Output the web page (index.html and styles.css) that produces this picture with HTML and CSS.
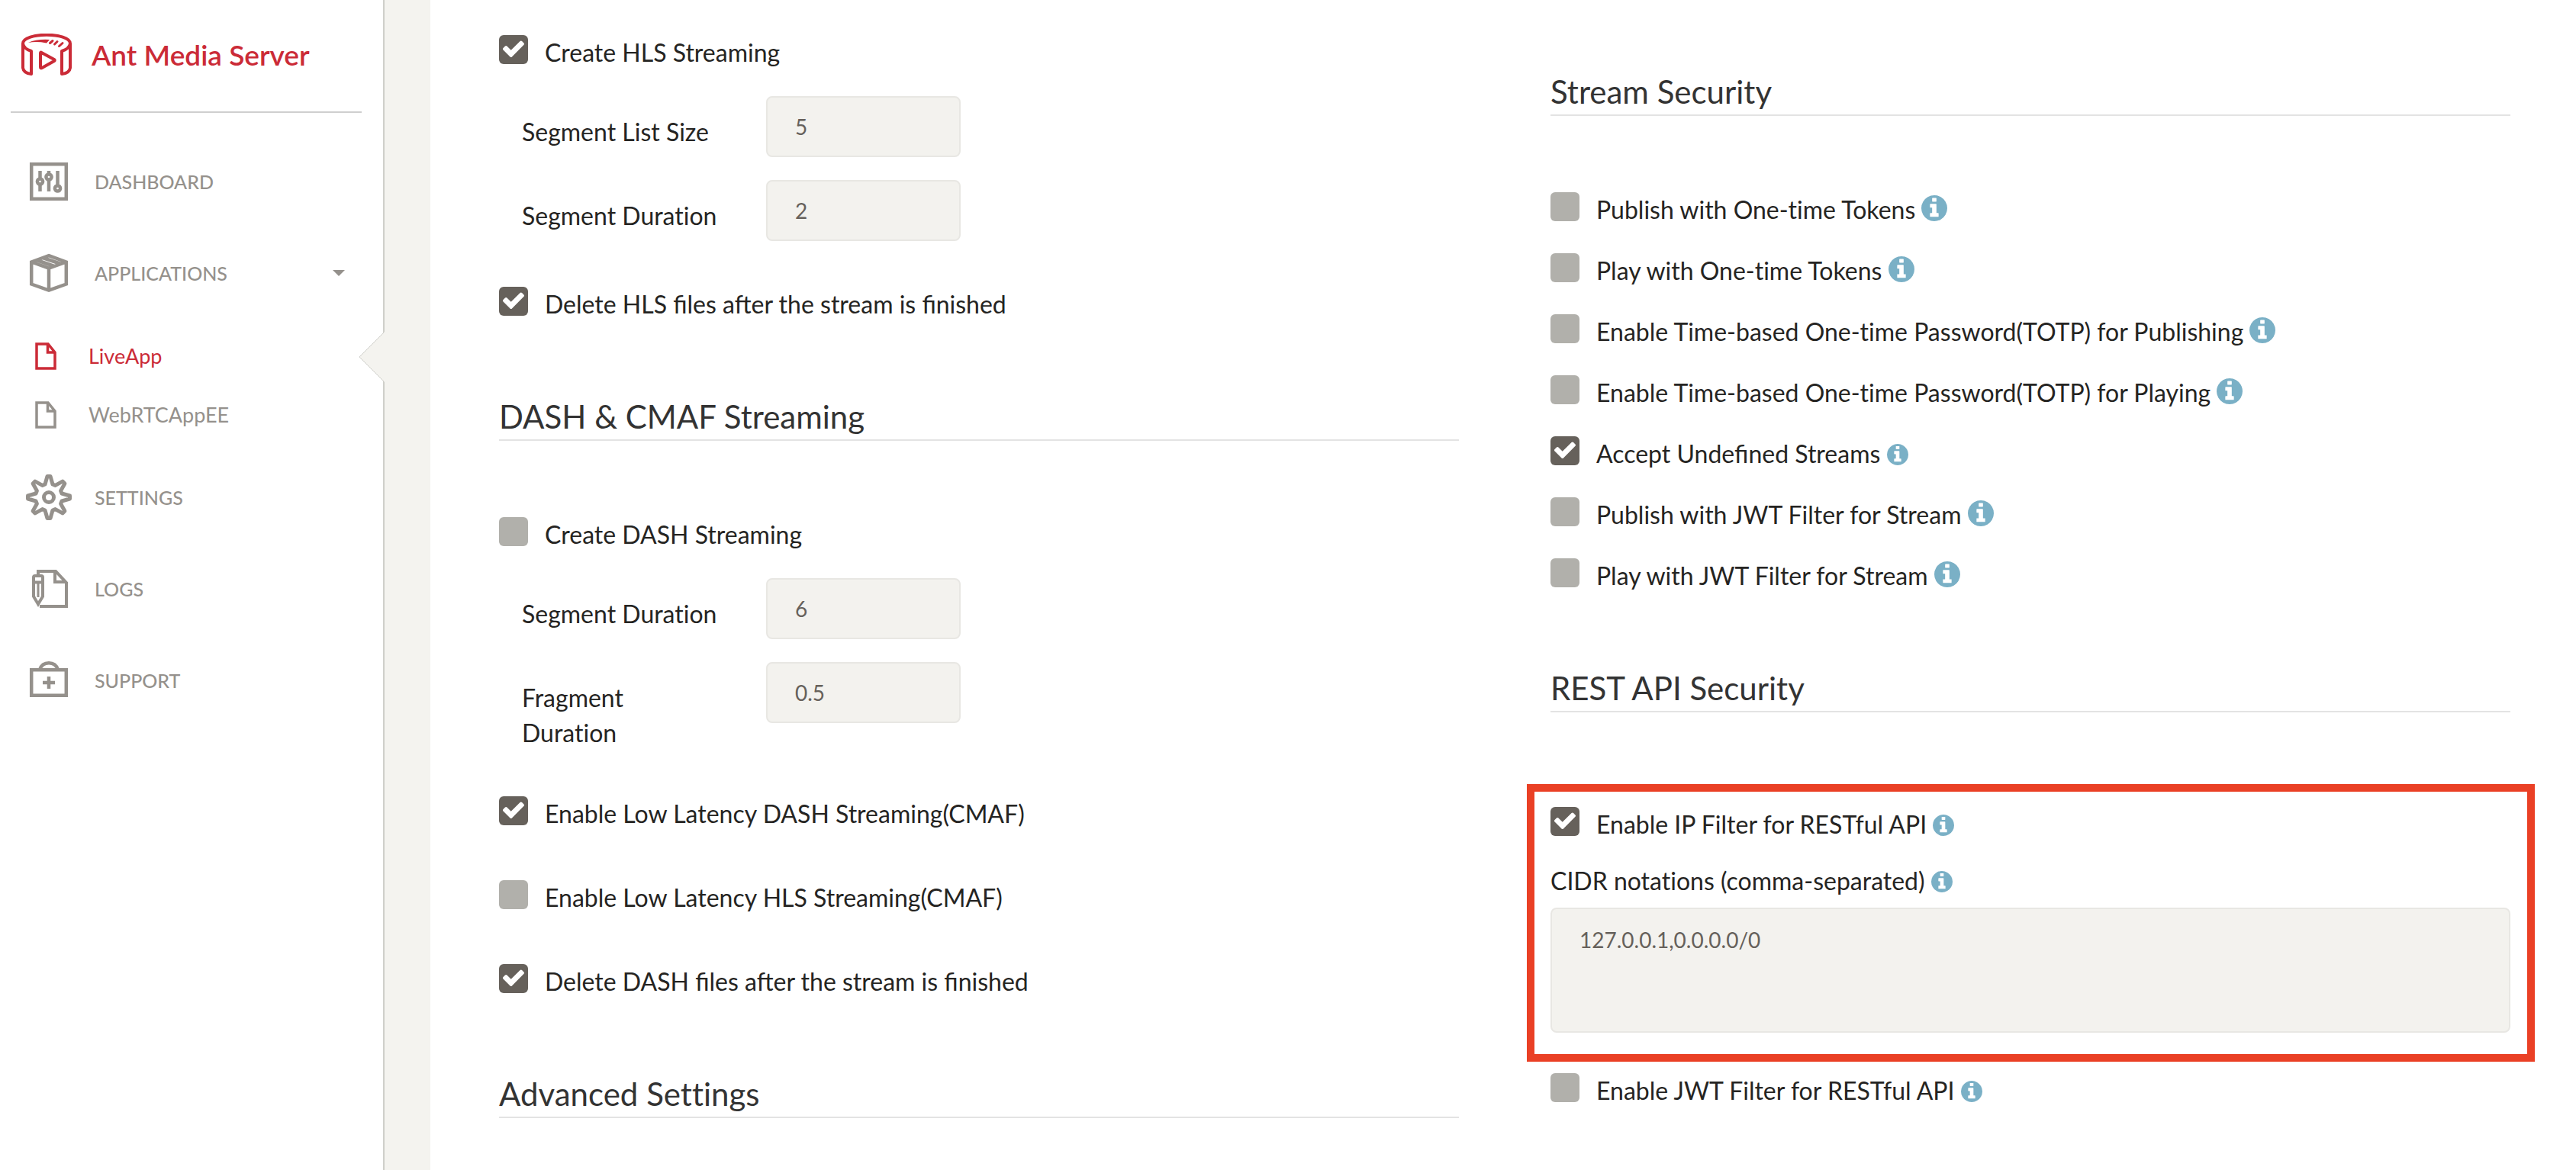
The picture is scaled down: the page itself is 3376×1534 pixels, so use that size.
FILE: index.html
```html
<!DOCTYPE html>
<html lang="en">
<head>
<meta charset="utf-8">
<title>Ant Media Server</title>
<link rel="stylesheet" href="styles.css">
</head>
<body>
<svg class="sprite" aria-hidden="true">
  <symbol id="info" viewBox="128 128 1536 1536"><path d="M1152 1376v-160q0-14-9-23t-23-9h-96v-512q0-14-9-23t-23-9h-320q-14 0-23 9t-9 23v160q0 14 9 23t23 9h96v320h-96q-14 0-23 9t-9 23v160q0 14 9 23t23 9h448q14 0 23-9t9-23zm-128-896v-160q0-14-9-23t-23-9h-192q-14 0-23 9t-9 23v160q0 14 9 23t23 9h192q14 0 23-9t9-23zm640 416q0 209-103 385.5t-279.5 279.5-385.5 103-385.5-103-279.5-279.5-103-385.5 103-385.5 279.5-279.5 385.5-103 385.5 103 279.5 279.5 103 385.5z"/></symbol>
  <symbol id="file" viewBox="0 0 28 36"><path d="M2 2H17L26 13V34H2ZM16.500 2V13H26" fill="none" stroke="currentColor" stroke-width="3.500"/></symbol>
</svg>
<div class="layout">
  <aside class="sidebar">
    <a class="brand" href="#">
      <svg class="brand-logo" viewBox="0 0 66 55" fill="none" stroke="currentColor" stroke-width="4" stroke-linejoin="round" stroke-linecap="round">
        <path d="M2 13V45Q3 52 13 53V23Q3 20 2 13C2 -2 64 -2 64 13Q63 20 53 23V53Q63 52 64 45V13"/>
        <path d="M25 25.500Q25 24 26.500 25L43 34Q44.500 35 43 36L27 45Q25 46 25 44Z"/>
        <path d="M9 12Q20 7 37 8L33 12.500Q20 10 9 12Z" fill="currentColor" stroke="none"/>
        <path d="M41 9.500L37.500 12.500M47 10.500L43.500 14M54 12.500L49.500 16.500" stroke-width="3"/>
      </svg>
      <span>Ant Media Server</span>
    </a>
    <nav>
      <ul class="nav">
        <li><a class="nav-link" href="#"><svg class="nav-icon" viewBox="0 0 50 50" fill="none" stroke="currentColor" stroke-width="4.500"><path d="M2.200 2.200H47.800V47.800H2.200ZM13.500 11V20M13.500 30V38M25 11V14M25 24V38M36.500 11V29"/><circle cx="13.500" cy="25" r="3.600"/><circle cx="25" cy="19" r="3.600"/><circle cx="36.500" cy="34" r="3.600"/></svg>DASHBOARD</a></li>
        <li><button class="nav-link" type="button" aria-expanded="true"><svg class="nav-icon" viewBox="0 0 50 50" fill="none" stroke="currentColor" stroke-width="4.500"><path d="M25 2.200L47.800 10.500V39.500L25 47.500L2.200 39.500V10.500ZM2.200 10.500L25 18.500L47.800 10.500M25 18.500V47.500M9 8L32 16M17 5L41 13"/></svg>APPLICATIONS<span class="caret"></span></button>
          <ul class="subnav">
            <li><a class="sub-link active" href="#"><svg class="file-icon"><use href="#file"/></svg>LiveApp</a><svg class="notch" viewBox="0 0 34 66"><path d="M34 0L1 33L34 66Z" fill="#f4f3ef"/><path d="M33 1L1 33L33 65" fill="none" stroke="#cfcfca" stroke-width="1"/></svg></li>
            <li><a class="sub-link" href="#"><svg class="file-icon"><use href="#file"/></svg>WebRTCAppEE</a></li>
          </ul>
        </li>
        <li><a class="nav-link" href="#"><svg class="nav-icon" viewBox="-25 -25 50 50" fill="none" stroke="currentColor" stroke-width="5"><path stroke-linejoin="round" d="M-2-27.500L2-27.500L5-17L8.500-15.600L18-20.900L20.900-18L15.600-8.500L17-5L27.500-2L27.500 2L17 5L15.600 8.500L20.900 18L18 20.900L8.500 15.600L5 17L2 27.500L-2 27.500L-5 17L-8.500 15.600L-18 20.900L-20.900 18L-15.600 8.500L-17 5L-27.500 2L-27.500-2L-17-5L-15.600-8.500L-20.900-18L-18-20.900L-8.500-15.600L-5-17Z"/><circle r="6.500"/></svg>SETTINGS</a></li>
        <li><a class="nav-link" href="#"><svg class="nav-icon" viewBox="0 0 50 50" fill="none" stroke="currentColor" stroke-width="4"><path d="M11 8V2H34L48 17V48H13M33 2V16H48M5 35V10Q5 8 7 8H15Q17 8 17 10V35L11 45ZM5 16.500H17"/><path d="M11 18V36" stroke-width="3"/></svg>LOGS</a></li>
        <li><a class="nav-link" href="#"><svg class="nav-icon" viewBox="0 0 50 50" fill="none" stroke="currentColor" stroke-width="4.500"><path d="M2.200 11.200H47.800V44.800H2.200ZM13 11Q16 2.200 25 2.200T37 11M17 28H33M25 20V36"/></svg>SUPPORT</a></li>
      </ul>
    </nav>
  </aside>

  <main class="content">
    <section class="column">
      <label class="option"><input type="checkbox" checked><span>Create HLS Streaming</span></label>
      <div class="fields">
        <div class="field"><label for="hls-size">Segment List Size</label><input id="hls-size" type="text" value="5"></div>
        <div class="field"><label for="hls-duration">Segment Duration</label><input id="hls-duration" type="text" value="2"></div>
      </div>
      <div class="options loose">
        <label class="option ligatures"><input type="checkbox" checked><span>Delete HLS files after the stream is finished</span></label>
      </div>
      <h2>DASH &amp; CMAF Streaming</h2>
      <label class="option"><input type="checkbox"><span>Create DASH Streaming</span></label>
      <div class="fields">
        <div class="field"><label for="dash-duration">Segment Duration</label><input id="dash-duration" type="text" value="6"></div>
        <div class="field"><label for="dash-fragment">Fragment Duration</label><input id="dash-fragment" type="text" value="0.5"></div>
      </div>
      <div class="options loose">
        <label class="option"><input type="checkbox" checked><span>Enable Low Latency DASH Streaming(CMAF)</span></label>
        <label class="option"><input type="checkbox"><span>Enable Low Latency HLS Streaming(CMAF)</span></label>
        <label class="option ligatures"><input type="checkbox" checked><span>Delete DASH files after the stream is finished</span></label>
      </div>
      <h2 class="last">Advanced Settings</h2>
    </section>

    <section class="column security">
      <h2>Stream Security</h2>
      <div class="options">
        <label class="option"><input type="checkbox"><span>Publish with One-time Tokens <svg class="info large"><use href="#info"/></svg></span></label>
        <label class="option"><input type="checkbox"><span>Play with One-time Tokens <svg class="info large"><use href="#info"/></svg></span></label>
        <label class="option"><input type="checkbox"><span>Enable Time-based One-time Password(TOTP) for Publishing <svg class="info large"><use href="#info"/></svg></span></label>
        <label class="option"><input type="checkbox"><span>Enable Time-based One-time Password(TOTP) for Playing <svg class="info large"><use href="#info"/></svg></span></label>
        <label class="option ligatures"><input type="checkbox" checked><span>Accept Undefined Streams <svg class="info"><use href="#info"/></svg></span></label>
        <label class="option"><input type="checkbox"><span>Publish with JWT Filter for Stream <svg class="info large"><use href="#info"/></svg></span></label>
        <label class="option"><input type="checkbox"><span>Play with JWT Filter for Stream <svg class="info large"><use href="#info"/></svg></span></label>
      </div>
      <h2 class="rest">REST API Security</h2>
      <div class="highlight">
        <label class="option"><input type="checkbox" checked><span>Enable IP Filter for RESTful API <svg class="info"><use href="#info"/></svg></span></label>
        <label class="cidr-label" for="cidr">CIDR notations (comma-separated) <svg class="info"><use href="#info"/></svg></label>
        <textarea id="cidr">127.0.0.1,0.0.0.0/0</textarea>
      </div>
      <label class="option"><input type="checkbox"><span>Enable JWT Filter for RESTful API <svg class="info"><use href="#info"/></svg></span></label>
    </section>
  </main>
</div>
</body>
</html>
```

FILE: styles.css
```css
* { box-sizing: border-box; }
body {
  margin: 0;
  background: #fff;
  color: #252422;
  font: 32px/46px Lato, "Open Sans", sans-serif;
  font-variant-ligatures: none;
}
ul { margin: 0; padding: 0; list-style: none; }
a { color: inherit; text-decoration: none; }
.sprite { display: none; }
.layout { display: flex; min-height: 100vh; background: #f4f3ef; }

/* Sidebar */
.sidebar {
  flex: 0 0 504px;
  background: #fff;
  border-right: 2px solid #cfcfca;
}
.brand {
  display: flex;
  align-items: center;
  gap: 26px;
  height: 148px;
  margin: 0 28px 30px 14px;
  padding: 0 14px 3px;
  border-bottom: 2px solid #cfcfcf;
  color: #cb2b37;
  font-size: 37px;
  font-weight: 600;
}
.brand-logo { width: 66px; height: 55px; }
.nav-link {
  display: flex;
  align-items: center;
  gap: 35px;
  width: 100%;
  height: 120px;
  padding: 0 50px 0 39px;
  border: 0;
  background: none;
  color: #95918c;
  font: 500 25px/46px Lato, "Open Sans", sans-serif;
}
.nav-icon { width: 50px; height: 50px; overflow: visible; }
.caret {
  margin-left: auto;
  border: 8px solid transparent;
  border-top-color: #95918c;
  border-bottom: 0;
}
.subnav { padding: 10px 0; }
.subnav li { position: relative; }
.sub-link {
  display: flex;
  align-items: center;
  gap: 42px;
  height: 77px;
  padding-left: 46px;
  color: #95918c;
  font-size: 27px;
}
.sub-link.active { color: #cb2b37; }
.file-icon { width: 28px; height: 36px; }
.notch { position: absolute; top: 7px; right: -2px; width: 34px; height: 66px; }

/* Settings form */
.content {
  flex: 1;
  display: grid;
  grid-template-columns: 1fr 1fr;
  gap: 120px;
  margin-left: 60px;
  padding: 0 86px 0 90px;
  background: #fff;
}
.column { padding: 46px 0; }
.security { padding-top: 94px; }
h2 {
  margin: 98px 0 100px;
  padding-bottom: 4px;
  border-bottom: 2px solid #e3e3e3;
  color: #333;
  font-size: 42px;
  font-weight: 400;
  line-height: 52px;
}
h2.last { margin-bottom: 0; }
h2.rest { margin-bottom: 94px; }
.security h2:first-child { margin-top: 0; }

.option { display: flex; align-items: flex-start; gap: 22px; }
.option.ligatures { font-variant-ligatures: normal; }
.options { display: grid; gap: 34px; }
.options.loose { gap: 64px; }
input[type="checkbox"] {
  appearance: none;
  flex: none;
  width: 38px;
  height: 38px;
  margin: 0;
  border-radius: 6px;
  background: #b1b0ab;
}
input[type="checkbox"]:checked {
  background: #66615b url("data:image/svg+xml,%3Csvg xmlns='http://www.w3.org/2000/svg' viewBox='121 316 1550 1206'%3E%3Cpath fill='white' d='M1671 566q0 40-28 68l-724 724-136 136q-28 28-68 28t-68-28l-136-136-362-362q-28-28-28-68t28-68l136-136q28-28 68-28t68 28l294 295 656-657q28-28 68-28t68 28l136 136q28 28 28 68z'/%3E%3C/svg%3E") 5px 7px / 28px 22px no-repeat;
}

.fields { display: grid; gap: 30px; margin: 34px 0 60px; padding-left: 30px; }
.field { display: grid; grid-template-columns: 260px 255px; column-gap: 60px; align-items: start; }
.field label { padding-top: 24px; }
input[type="text"], textarea {
  width: 100%;
  border: 2px solid #e8e7e3;
  border-radius: 8px;
  background: #f3f2ee;
  color: #66615b;
  font: 28px/40px Lato, "Open Sans", sans-serif;
}
input[type="text"] { height: 80px; padding: 0 36px; }
textarea { display: block; height: 164px; padding: 20px 36px; resize: none; }

.info { width: 28px; height: 28px; vertical-align: -3px; fill: #7ab0c6; }
.info.large { width: 34px; height: 34px; }

.highlight {
  margin: 0 -32px 15px -31px;
  padding: 20px 22px 28px 21px;
  border: 10px solid #ea4025;
}
.cidr-label { display: block; margin: 28px 0 12px; }
```
